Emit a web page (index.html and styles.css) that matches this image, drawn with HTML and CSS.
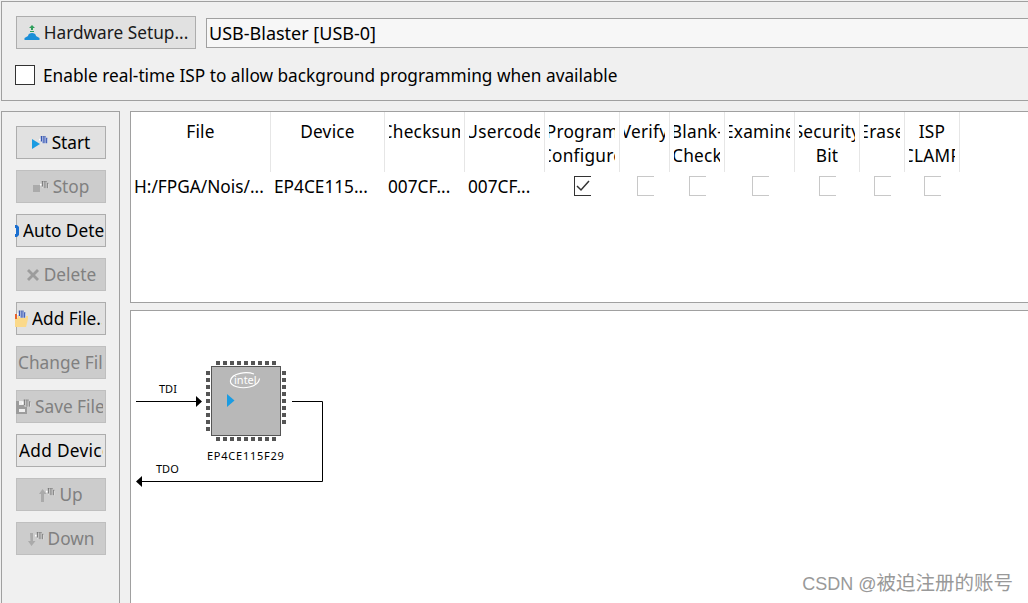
FILE: index.html
```html
<!DOCTYPE html>
<html lang="en">
<head>
    <meta charset="UTF-8">
    <title>Programmer</title>
    <link rel="stylesheet" href="styles.css">
</head>
<body>
    <svg class="defs" width="0" height="0">
        <symbol id="stripes" viewBox="0 0 10 10">
            <path d="M2 1h6v2h2v5H3V5H0V3h2z" fill="#fff"/>
            <path d="M2 0h1.200v6H2zM4 0h1.200v8H4zM6 0h1.200v8H6zM8 2h1.200v6H8z" fill="currentColor"/>
        </symbol>
    </svg>

    <div class="top-panel">
        <div class="hardware-row">
            <button class="btn btn-hardware">
                <svg class="icon-hw" width="16" height="16" viewBox="0 0 16 16">
                    <path d="M8 0l3 3H9v2H7V3H5z" fill="#2e9e5b"/>
                    <path d="M6 6h4v1H6z" fill="#2e9e5b"/>
                    <path d="M4 11c0-2 2-3 4-3s4 1 4 3l3.500 2v2H.5v-2z" fill="#1b8fd8"/>
                </svg>
                <span>Hardware Setup...</span>
            </button>
            <div class="hardware-field">USB-Blaster [USB-0]</div>
        </div>
        <label class="isp-row">
            <span class="isp-box"></span>
            <span class="isp-text">Enable real-time ISP to allow background programming when available</span>
        </label>
    </div>

    <div class="main">
        <div class="side-panel">
            <button class="btn">
                <svg width="16" height="13" viewBox="0 0 16 13">
                    <path d="M0 3l8 5-8 5z" fill="#1b9ce2"/>
                    <use href="#stripes" x="7" y="0" width="9" height="9" class="stripes-start"/>
                </svg>
                <span>Start</span>
            </button>
            <button class="btn btn-off">
                <svg width="16" height="12" viewBox="0 0 16 12">
                    <path d="M0 4h7v7H0z" fill="#aaa"/>
                    <use href="#stripes" x="7" y="0" width="9" height="9"/>
                </svg>
                <span>Stop</span>
            </button>
            <button class="btn btn-clip btn-auto">
                <svg class="icon-auto" width="4" height="14" viewBox="0 0 4 14">
                    <path d="M0 1h2l2 2v8l-2 2H0v-3h1V4H0z" fill="#1b6fd0"/>
                </svg>
                <span class="btn-label">Auto Detect</span>
            </button>
            <button class="btn btn-off">
                <svg width="14" height="14" viewBox="0 0 14 14">
                    <path d="M1 3l2-2 4 4 4-4 2 2-4 4 4 4-2 2-4-4-4 4-2-2 4-4z" fill="#9c9c9c"/>
                </svg>
                <span>Delete</span>
            </button>
            <button class="btn btn-clip btn-add">
                <svg class="icon-add" width="13" height="17" viewBox="0 0 13 17">
                    <path d="M0 8h3V6h10v3l-2 8H0z" fill="#fbd98a"/>
                    <path d="M0 4h2v5H0z" fill="#e8622a"/>
                    <use href="#stripes" x="2" y="0" width="9" height="10" class="stripes-start"/>
                </svg>
                <span class="btn-label">Add File...</span>
            </button>
            <button class="btn btn-off btn-clip btn-plain">
                <span class="btn-label">Change File</span>
            </button>
            <button class="btn btn-off btn-clip btn-save">
                <svg class="icon-save" width="15" height="15" viewBox="0 0 15 15">
                    <path d="M0 2h11v13H0z" fill="#9c9c9c"/>
                    <path d="M3 10h6v3H3zM3 2h5v4H3z" fill="#eee"/>
                    <use href="#stripes" x="6" y="0" width="9" height="10"/>
                </svg>
                <span class="btn-label">Save File</span>
            </button>
            <button class="btn btn-clip btn-plain btn-device">
                <span class="btn-label">Add Device</span>
            </button>
            <button class="btn btn-off">
                <svg width="16" height="14" viewBox="0 0 16 14">
                    <path d="M3.500 1l4 5H5v8H2V6H0z" fill="#aaa"/>
                    <use href="#stripes" x="7" y="0" width="9" height="9"/>
                </svg>
                <span>Up</span>
            </button>
            <button class="btn btn-off">
                <svg width="16" height="14" viewBox="0 0 16 14">
                    <path d="M2 1h3v8h2.500l-4 5-3.500-5h2.500z" fill="#aaa"/>
                    <use href="#stripes" x="7" y="0" width="9" height="9"/>
                </svg>
                <span>Down</span>
            </button>
        </div>

        <div class="work-area">
            <div class="file-table">
                <div class="th"><div class="th-clip"><span>File</span></div></div>
                <div class="th"><div class="th-clip"><span>Device</span></div></div>
                <div class="th"><div class="th-clip"><span>Checksum</span></div></div>
                <div class="th"><div class="th-clip"><span>Usercode</span></div></div>
                <div class="th"><div class="th-clip"><span>Program</span><span>Configure</span></div></div>
                <div class="th"><div class="th-clip"><span>Verify</span></div></div>
                <div class="th"><div class="th-clip"><span>Blank-</span><span>Check</span></div></div>
                <div class="th"><div class="th-clip"><span>Examine</span></div></div>
                <div class="th"><div class="th-clip"><span>Security</span><span>Bit</span></div></div>
                <div class="th"><div class="th-clip"><span>Erase</span></div></div>
                <div class="th"><div class="th-clip"><span>ISP</span><span>CLAMP</span></div></div>

                <div class="td">H:/FPGA/Nois/...</div>
                <div class="td">EP4CE115...</div>
                <div class="td">007CF...</div>
                <div class="td">007CF...</div>
                <div class="td-check"><span class="tick tick-on">
                    <svg width="14" height="12" viewBox="0 0 14 12"><path d="M1 6l4 4 8-9" fill="none" stroke="#333" stroke-width="1.500"/></svg>
                </span></div>
                <div class="td-check"><span class="tick"></span></div>
                <div class="td-check"><span class="tick"></span></div>
                <div class="td-check"><span class="tick"></span></div>
                <div class="td-check"><span class="tick"></span></div>
                <div class="td-check"><span class="tick"></span></div>
                <div class="td-check"><span class="tick"></span></div>
            </div>

            <div class="chain">
                <svg class="chain-svg" width="900" height="293" viewBox="131 311 900 293">
                    <g fill="none" stroke="#000">
                        <path d="M136 401.500h62"/>
                        <path d="M292 401.500h30.500v80H140"/>
                    </g>
                    <path d="M196 396l6 5.500-6 5.500z"/>
                    <path d="M142 476l-6 5.500 6 5.500z"/>
                    <text x="159" y="393" class="chain-text">TDI</text>
                    <text x="156" y="473" class="chain-text">TDO</text>
                    <g id="pins" fill="#555">
                        <path d="M216 361h4v4h-4zM223 361h4v4h-4zM230 361h4v4h-4zM237 361h4v4h-4zM244 361h4v4h-4zM251 361h4v4h-4zM258 361h4v4h-4zM265 361h4v4h-4zM272 361h4v4h-4z"/>
                        <path d="M216 437h4v4h-4zM223 437h4v4h-4zM230 437h4v4h-4zM237 437h4v4h-4zM244 437h4v4h-4zM251 437h4v4h-4zM258 437h4v4h-4zM265 437h4v4h-4zM272 437h4v4h-4z"/>
                        <path d="M206 371h4v4h-4zM206 378h4v4h-4zM206 385h4v4h-4zM206 392h4v4h-4zM206 399h4v4h-4zM206 406h4v4h-4zM206 413h4v4h-4zM206 420h4v4h-4zM206 427h4v4h-4z"/>
                        <path d="M282 371h4v4h-4zM282 378h4v4h-4zM282 385h4v4h-4zM282 392h4v4h-4zM282 399h4v4h-4zM282 406h4v4h-4zM282 413h4v4h-4zM282 420h4v4h-4z"/>
                    </g>
                    <rect x="211.500" y="366.500" width="69" height="69" fill="#b8b8b8" stroke="#555"/>
                    <path d="M227 394l7.500 6.500-7.500 6.500z" fill="#1b9ce2"/>
                    <path d="M254 374c-7-2.500-22-1.500-23.500 6.500-1 6 11 8.500 19 6.500 5-1.300 9.500-4 10-8.500" fill="none" stroke="#fff" stroke-width="1.200"/>
                    <text x="234" y="383.500" class="chain-intel">intel</text>
                    <text x="207" y="460" class="chain-text chain-part">EP4CE115F29</text>
                </svg>
            </div>
        </div>
    </div>

    <div class="watermark"><span class="watermark-site">CSDN @</span>被迫注册的账号</div>
</body>
</html>
```

FILE: styles.css
```css
html, body {
    margin: 0;
    height: 100%;
    overflow: hidden;
}
body {
    position: relative;
    width: 1028px;
    height: 603px;
    background-color: #f0f0f0;
    color: #000;
    font-family: "Noto Sans", "Open Sans", sans-serif;
    font-size: 17.25px;
}
.defs {
    display: block;
    height: 0;
}
button {
    font: inherit;
    padding: 0;
}

.top-panel {
    box-sizing: border-box;
    width: 1040px;
    height: 100px;
    margin: 1px 0 0 1px;
    padding: 14px 0 0 14px;
    border: 1px solid #a0a0a0;
}
.hardware-row {
    display: flex;
    align-items: center;
    gap: 10px;
}
.btn {
    box-sizing: border-box;
    display: flex;
    align-items: center;
    justify-content: center;
    gap: 4px;
    width: 90px;
    height: 33px;
    background-color: #e1e1e1;
    border: 1px solid #adadad;
    color: #000;
    white-space: nowrap;
}
.btn-hardware {
    width: 180px;
    color: #1a1a1a;
}
.hardware-field {
    box-sizing: border-box;
    flex: 1;
    height: 30px;
    padding-left: 2px;
    font-size: 18px;
    line-height: 29px;
    background-color: #f7f7f7;
    border: 1px solid #a0a0a0;
}
.isp-row {
    display: flex;
    align-items: center;
    gap: 8px;
    margin-top: 13px;
    margin-left: -1px;
    line-height: 24px;
}
.isp-text {
    padding-top: 2px;
}
.isp-box {
    box-sizing: border-box;
    width: 20px;
    height: 20px;
    background: #fff;
    border: 1px solid #333;
}

.main {
    display: flex;
    gap: 10px;
    margin: 10px 0 0 1px;
}
.side-panel {
    box-sizing: border-box;
    flex: none;
    display: flex;
    flex-direction: column;
    gap: 11px;
    width: 119px;
    height: 500px;
    padding: 14px 0 0 14px;
    border: 1px solid #a0a0a0;
}
.btn-off {
    background-color: #cccccc;
    border-color: #bfbfbf;
    color: #707070;
}
.btn-off span {
    color: #808080;
}
.stripes-start {
    color: #1b3fa8;
}
.btn-clip {
    justify-content: flex-start;
}
.btn-label {
    flex: 1;
    min-width: 0;
    overflow: hidden;
    text-align: left;
}
.btn-auto {
    padding: 0 1px 0 0;
}
.icon-auto {
    flex: none;
    margin-left: -2px;
}
.btn-add {
    padding-right: 3px;
}
.icon-add {
    flex: none;
    margin-left: -2px;
}
.btn-save {
    padding-right: 2px;
}
.icon-save {
    flex: none;
    margin-left: -1px;
}
.btn-plain {
    padding: 0 2px 0 1px;
}
.btn-device {
    background-color: #e6e6e6;
    padding-left: 2px;
    letter-spacing: 0.3px;
}

.work-area {
    flex: none;
    display: flex;
    flex-direction: column;
    gap: 7px;
    width: 910px;
}
.file-table {
    box-sizing: border-box;
    display: grid;
    grid-template-columns: 140px 114px 80px 80px 75px 50px 55px 70px 65px 45px 55px 1fr;
    grid-template-rows: 60px 1fr;
    align-content: start;
    height: 192px;
    background: #fff;
    border: 1px solid #a0a0a0;
    border-right: none;
}
.th {
    display: flex;
    justify-content: center;
    min-width: 0;
    padding: 8px 4px 0;
    border-right: 1px solid #e6e6e6;
    box-sizing: border-box;
}
.th-clip {
    display: flex;
    flex-direction: column;
    align-items: center;
    width: 100%;
    overflow: hidden;
    line-height: 24px;
    letter-spacing: 0.25px;
    white-space: nowrap;
}
.th:nth-child(11) + .td {
    grid-column: 1;
}
.td {
    padding: 3px 0 0 3px;
    line-height: 24px;
    white-space: nowrap;
    overflow: hidden;
}
.td-check {
    display: flex;
    justify-content: center;
    padding-top: 4px;
}
.tick {
    box-sizing: border-box;
    display: flex;
    align-items: center;
    justify-content: center;
    width: 17px;
    height: 20px;
    border: 1px solid #c8c8c8;
    border-right: none;
}
.tick-on {
    border-color: #333;
}
.chain {
    box-sizing: border-box;
    height: 300px;
    background: #fff;
    border: 1px solid #a0a0a0;
    border-right: none;
}
.chain-svg {
    display: block;
}
.chain-text {
    font-size: 11px;
}
.chain-part {
    letter-spacing: 0.75px;
}
.chain-intel {
    fill: #fff;
    font-size: 11px;
}

.watermark {
    position: absolute;
    right: 15px;
    bottom: 7px;
    color: #999;
    font-family: "Liberation Sans", "Noto Sans CJK SC", sans-serif;
    font-size: 19.5px;
    white-space: nowrap;
}
.watermark-site {
    font-size: 18px;
}
```
